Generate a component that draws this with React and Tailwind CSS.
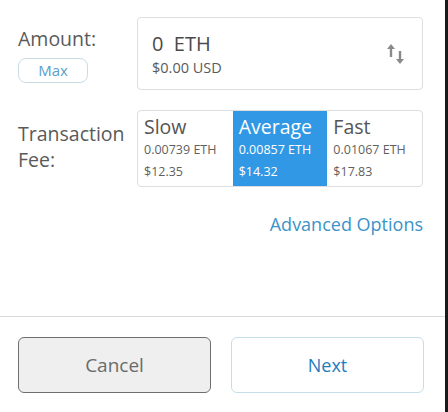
import React from "react";

const font = { fontFamily: "'Open Sans', Lato, sans-serif" };

function SwapIcon() {
  return (
    <svg width="20" height="24" viewBox="0 0 20 24" fill="#8a8a8a">
      <path d="M5 2 L9 7 L6.2 7 L6.2 15 L3.8 15 L3.8 7 L1 7 Z" />
      <path d="M14 22 L10 17 L12.8 17 L12.8 9 L15.2 9 L15.2 17 L18 17 Z" />
    </svg>
  );
}

function FeeOption({ title, eth, usd, active }) {
  return (
    <div
      className={
        "flex-1 flex flex-col pl-[6px] pt-[3px] " +
        (active ? "bg-[#3098e4] text-white" : "text-[#555]")
      }
    >
      <div className="text-[19.5px] leading-[25px]">{title}</div>
      <div className={"text-[12.5px] leading-[14px] mt-[4px] " + (active ? "text-white" : "text-[#5f5f5f]")}>{eth}</div>
      <div className={"text-[12.5px] leading-[14px] mt-[8px] " + (active ? "text-white" : "text-[#5f5f5f]")}>{usd}</div>
    </div>
  );
}

export default function App() {
  return (
    <div className="w-[448px] h-[412px] flex bg-white" style={font}>
      <div className="flex-1 flex flex-col">
        <div className="flex-1 flex flex-col pl-[18px] pr-[22px] pt-[17px]">
          <div className="flex">
            <div className="w-[119px] flex flex-col">
              <div className="text-[19.5px] text-[#5a5a5a] leading-[26px] mt-[9px]">Amount:</div>
              <div className="mt-[6px] w-[70px] h-[25px] rounded-[8px] border border-[#c9dce6] flex items-center justify-center text-[15px] text-[#5a9ec9]">
                Max
              </div>
            </div>
            <div className="flex-1 h-[73px] border border-[#dedede] rounded-[4px] flex items-center pl-[14px] pr-[16px]">
              <div className="flex-1 flex flex-col">
                <div className="text-[20px] leading-[26px] text-[#4a4a4a]">0&nbsp;&nbsp;ETH</div>
                <div className="text-[14.5px] leading-[18px] text-[#5a5a5a] mt-[2px]">$0.00 USD</div>
              </div>
              <SwapIcon />
            </div>
          </div>

          <div className="flex mt-[20px]">
            <div className="w-[119px] text-[19.5px] text-[#5a5a5a] leading-[26px] pt-[11px]">
              <div>Transaction</div>
              <div>Fee:</div>
            </div>
            <div className="flex-1 h-[77px] border border-[#dedede] rounded-[4px] flex overflow-hidden">
              <FeeOption title="Slow" eth="0.00739 ETH" usd="$12.35" />
              <FeeOption title="Average" eth="0.00857 ETH" usd="$14.32" active />
              <FeeOption title="Fast" eth="0.01067 ETH" usd="$17.83" />
            </div>
          </div>

          <div className="flex justify-end mt-[24px]">
            <span className="text-[18px] text-[#3b93c8] leading-[26px]">Advanced Options</span>
          </div>
        </div>

        <div className="h-px bg-[#d8d8d8]" />

        <div className="h-[95px] flex gap-[20px] pl-[18px] pr-[21px] pt-[20px]">
          <div className="flex-1 h-[56px] rounded-[6px] border border-[#6f6f6f] bg-[#efeff0] flex items-center justify-center text-[19px] text-[#6b6b6b]">
            Cancel
          </div>
          <div className="flex-1 h-[56px] rounded-[6px] border border-[#c5dde8] bg-white flex items-center justify-center text-[18px] text-[#1f7dbe]">
            Next
          </div>
        </div>
      </div>
      <div className="w-[3px] bg-[#1a1a1a]" />
    </div>
  );
}
